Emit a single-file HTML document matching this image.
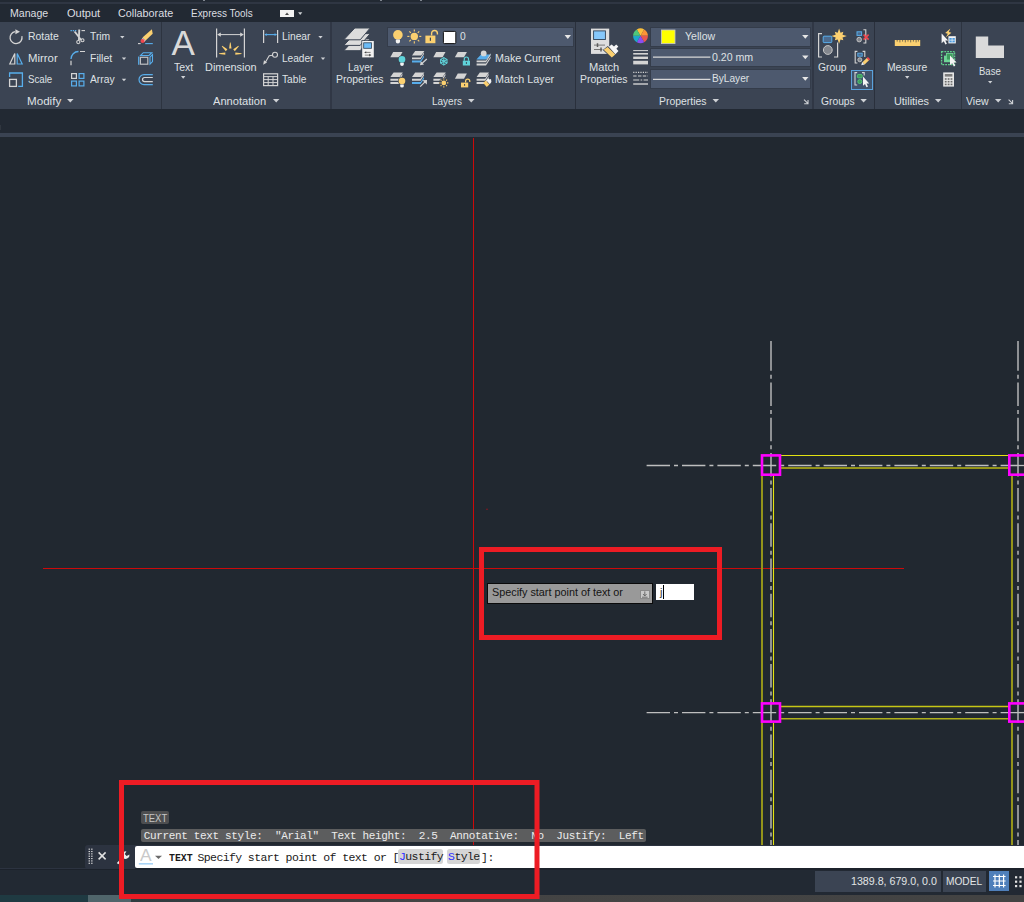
<!DOCTYPE html><html><head><meta charset='utf-8'><title>AutoCAD</title><style>
html,body{margin:0;padding:0;background:#212830;}
body{width:1024px;height:902px;position:relative;overflow:hidden;font-family:"Liberation Sans",sans-serif;}
.a{position:absolute;}
.l{position:absolute;white-space:pre;transform-origin:0 0;line-height:1.149;}
.sep{position:absolute;top:22px;height:87px;width:2px;background:#343c4a;}
.dd{position:absolute;background:#4d596e;border:1px solid #343c4a;box-sizing:border-box;}
.kw{background:#d5d5d5;border-radius:2.5px;padding-top:1.2px;padding-bottom:0px;}
.mono{font-family:"Liberation Mono","DejaVu Sans Mono",monospace;}
</style></head><body>
<div class='a' style='left:0;top:0;width:1024px;height:2px;background:#222933'></div>
<div class='a' style='left:0;top:2px;width:1024px;height:2px;background:#2f3643'></div><div class='a' style='left:0;top:4px;width:1024px;height:18px;background:#222933'></div>
<div class='a' style='left:0;top:22px;width:1024px;height:87px;background:#3b4453'></div>
<div class='a' style='left:0;top:109px;width:1024px;height:24px;background:#222933'></div>
<div class='a' style='left:0;top:133px;width:1024px;height:4px;background:#3a4352'></div>
<div class='a' style='left:0;top:137px;width:1024px;height:709px;background:#212830'></div>
<div class='sep' style='left:161px;width:1px;background:#2d3440'></div>
<div class='sep' style='left:330px;width:2px;background:#303745'></div>
<div class='sep' style='left:575px;width:1px;background:#2a303c'></div>
<div class='sep' style='left:812px;width:2px;background:#303745'></div>
<div class='sep' style='left:874px;width:1px;background:#2a303c'></div>
<div class='sep' style='left:961px;width:1px;background:#2d3440'></div>
<div class='dd' style='left:387px;top:27px;width:187px;height:20px'></div>
<div class='dd' style='left:650px;top:27px;width:161px;height:20px'></div>
<div class='dd' style='left:650px;top:48px;width:161px;height:19px'></div>
<div class='dd' style='left:650px;top:69px;width:161px;height:20px'></div>
<div class='a' style='left:851px;top:70px;width:22px;height:20px;box-sizing:border-box;border:1px solid #5aa2dc;background:#40536c'></div>
<div class='a' style='left:0;top:124.5px;width:1.3px;height:5.5px;background:#30363f'></div>
<div class='a' style='left:203px;top:0;width:2px;height:1px;background:#7f858f'></div>
<div class='a' style='left:380px;top:0;width:2px;height:1px;background:#7f858f'></div>
<div class='a' style='left:420px;top:0;width:2px;height:1px;background:#7f858f'></div>
<svg class="a" style="left:0;top:137px" width="1024" height="709" viewBox="0 137 1024 709">
<!-- crosshair -->
<rect x="473" y="138" width="1" height="707" fill="#cc0a0a"/>
<rect x="43" y="568" width="861" height="1" fill="#cc0a0a"/>
<rect x="486" y="508.7" width="2" height="1.1" fill="#7a1a22"/>
<!-- center lines -->
<g stroke="#8f9194" stroke-width="2" fill="none">
<path d="M771 341V348"/>
<path d="M771 347.3V846" stroke-dasharray="23.5 4 4 3.7"/>
<path d="M1018 341V348"/>
<path d="M1018 347.3V846" stroke-dasharray="23.5 4 4 3.7"/>
</g>
<g stroke="#bebebe" stroke-width="1.3" fill="none">
<path d="M646.6 465.5H1024" stroke-dasharray="23.4 4 4 4"/>
<path d="M646.6 712.6H1024" stroke-dasharray="23.4 4 4 4"/>
</g>
<!-- yellow walls -->
<g fill="none">
<path d="M781 455.5H1008" stroke="#e2e212" stroke-width="1.1"/>
<path d="M781 468H1008" stroke="#94941a" stroke-width="2"/>
<path d="M762 476V846" stroke="#94941a" stroke-width="2"/>
<path d="M773.5 476V702M773.5 723V846" stroke="#e2e212" stroke-width="1.1"/>
<path d="M1012 476V702M1012 723V846" stroke="#94941a" stroke-width="2"/>
<path d="M781 706.5H1008" stroke="#c6c616" stroke-width="1.3"/>
<path d="M781 718.8H1008" stroke="#b0b01a" stroke-width="1.6"/>
</g>
<!-- magenta squares -->
<g fill="none" stroke="#ff00ff" stroke-width="2.6">
<rect x="762" y="455.4" width="18" height="19.3"/>
<rect x="1009.3" y="455.4" width="18" height="19.3"/>
<rect x="762" y="703.4" width="18" height="18.2"/>
<rect x="1009.3" y="703.4" width="18" height="18.2"/>
</g>
<!-- red annotation rectangles -->
<g fill="none" stroke="#ed1c24" stroke-width="5">
<rect x="481.5" y="549.5" width="238" height="88"/>
</g>
</svg>

<div class='a' style='left:85px;top:845px;width:939px;height:24px;background:#2c3340;border-radius:3px 0 0 3px'></div>
<div class='a' style='left:135px;top:845.5px;width:889px;height:22.5px;background:#fff;border-radius:2px 0 0 2px'></div>
<div class='a' style='left:0;top:869px;width:1024px;height:26px;background:#222933'></div>
<div class='a' style='left:0;top:868px;width:1024px;height:2px;background:#1c222b'></div>
<div class='a' style='left:0;top:868px;width:135px;height:1px;background:#2c3340'></div>
<div class='a' style='left:815px;top:871px;width:126px;height:21px;background:#3b4453'></div>
<div class='a' style='left:943px;top:871px;width:43px;height:21px;background:#3b4453'></div>
<div class='a' style='left:989px;top:871px;width:20px;height:20px;background:#4f7fba'></div>
<div class='a' style='left:0;top:895px;width:1024px;height:7px;background:linear-gradient(90deg,#2f3c40 131px,#444 420px,#434343 1024px)'></div>
<div class='a' style='left:0;top:895px;width:88px;height:7px;background:#1f3a42'></div>
<div class='a' style='left:88px;top:895px;width:43px;height:7px;background:#50656b'></div>
<div class='a' style='left:141px;top:811px;width:28.4px;height:13px;background:#4d4e50;border-radius:2px'></div>
<div class='a' style='left:141px;top:828.5px;width:505px;height:13.5px;background:rgba(100,100,100,0.88);border-radius:2px'></div>
<div class='a mono' id='hist' style='left:143.7px;top:830px;font-size:11px;line-height:13px;color:#ececec;white-space:pre;letter-spacing:-0.35px'>Current text style:  "Arial"  Text height:  2.5  Annotative:  No  Justify:  Left</div>
<div class='a mono' id='cmd' style='left:168.5px;top:850.6px;font-size:11.5px;line-height:14px;color:#1a1a1a;white-space:pre;letter-spacing:-0.61px'><b style='display:inline-block;letter-spacing:0;transform:scaleX(0.86);transform-origin:0 50%;margin-right:-4.9px'>TEXT</b> Specify start point of text or [<span class='kw' style='margin-left:-0.8px;padding-left:1px'><span style='color:#2b2bff'>J</span>ustify</span> <span class='kw' style='margin-left:-2.05px;padding-left:0.75px;padding-right:0.55px'><span style='color:#2b2bff'>S</span>tyle</span><span style='margin-left:1px'>]:</span></div>
<div class='a' style='left:487px;top:583px;width:166px;height:21px;box-sizing:border-box;border:1px solid #0a0a0a;background:#999999'></div>
<div class='a' style='left:640px;top:589.5px;width:9.5px;height:9px;background:#c9c9c9;border:1px solid #8a8a8a;box-sizing:border-box'></div>
<div class='a' style='left:656px;top:584px;width:38px;height:16px;background:#fff'></div>
<div class='a' style='left:663px;top:585px;width:1px;height:13.5px;background:#000'></div>
<div class='l' style='left:660px;top:585.5px;font-size:11px;color:#333'>j</div>
<div class='l' style='left:9.50px;top:6.59px;font-size:11.5px;color:#dcdee1;transform:scaleX(0.9191)'>Manage</div>
<div class='l' style='left:66.50px;top:6.59px;font-size:11.5px;color:#dcdee1;transform:scaleX(0.9614)'>Output</div>
<div class='l' style='left:117.50px;top:6.59px;font-size:11.5px;color:#dcdee1;transform:scaleX(0.9383)'>Collaborate</div>
<div class='l' style='left:190.50px;top:6.59px;font-size:11.5px;color:#dcdee1;transform:scaleX(0.8643)'>Express Tools</div>
<div class='l' style='left:27.50px;top:29.59px;font-size:11.5px;color:#dfe1e4;transform:scaleX(0.9059)'>Rotate</div>
<div class='l' style='left:27.50px;top:51.59px;font-size:11.5px;color:#dfe1e4;transform:scaleX(0.9890)'>Mirror</div>
<div class='l' style='left:27.50px;top:72.59px;font-size:11.5px;color:#dfe1e4;transform:scaleX(0.8408)'>Scale</div>
<div class='l' style='left:89.50px;top:29.59px;font-size:11.5px;color:#dfe1e4;transform:scaleX(0.8953)'>Trim</div>
<div class='l' style='left:89.50px;top:51.59px;font-size:11.5px;color:#dfe1e4;transform:scaleX(0.9143)'>Fillet</div>
<div class='l' style='left:89.50px;top:72.59px;font-size:11.5px;color:#dfe1e4;transform:scaleX(0.8951)'>Array</div>
<div class='l' style='left:26.50px;top:94.59px;font-size:11.5px;color:#dfe1e4;transform:scaleX(1.0096)'>Modify</div>
<div class='l' style='left:173.50px;top:60.59px;font-size:11.5px;color:#dfe1e4;transform:scaleX(0.9102)'>Text</div>
<div class='l' style='left:205.00px;top:60.59px;font-size:11.5px;color:#dfe1e4;transform:scaleX(0.9516)'>Dimension</div>
<div class='l' style='left:282.00px;top:29.59px;font-size:11.5px;color:#dfe1e4;transform:scaleX(0.8899)'>Linear</div>
<div class='l' style='left:282.00px;top:51.59px;font-size:11.5px;color:#dfe1e4;transform:scaleX(0.8782)'>Leader</div>
<div class='l' style='left:282.00px;top:72.59px;font-size:11.5px;color:#dfe1e4;transform:scaleX(0.8836)'>Table</div>
<div class='l' style='left:213.10px;top:94.59px;font-size:11.5px;color:#dfe1e4;transform:scaleX(0.9673)'>Annotation</div>
<div class='l' style='left:347.50px;top:60.59px;font-size:11.5px;color:#dfe1e4;transform:scaleX(0.8756)'>Layer</div>
<div class='l' style='left:336.10px;top:72.59px;font-size:11.5px;color:#dfe1e4;transform:scaleX(0.9080)'>Properties</div>
<div class='l' style='left:460.00px;top:29.59px;font-size:11.5px;color:#dfe1e4;transform:scaleX(0.8898)'>0</div>
<div class='l' style='left:494.50px;top:51.59px;font-size:11.5px;color:#dfe1e4;transform:scaleX(0.9358)'>Make Current</div>
<div class='l' style='left:494.50px;top:72.59px;font-size:11.5px;color:#dfe1e4;transform:scaleX(0.9355)'>Match Layer</div>
<div class='l' style='left:432.25px;top:94.59px;font-size:11.5px;color:#dfe1e4;transform:scaleX(0.8673)'>Layers</div>
<div class='l' style='left:589.25px;top:60.59px;font-size:11.5px;color:#dfe1e4;transform:scaleX(0.9640)'>Match</div>
<div class='l' style='left:580.25px;top:72.59px;font-size:11.5px;color:#dfe1e4;transform:scaleX(0.9052)'>Properties</div>
<div class='l' style='left:684.50px;top:29.59px;font-size:11.5px;color:#dfe1e4;transform:scaleX(0.9199)'>Yellow</div>
<div class='l' style='left:711.50px;top:50.59px;font-size:11.5px;color:#dfe1e4;transform:scaleX(0.9207)'>0.20 mm</div>
<div class='l' style='left:711.50px;top:72.09px;font-size:11.5px;color:#dfe1e4;transform:scaleX(0.8818)'>ByLayer</div>
<div class='l' style='left:659.25px;top:94.59px;font-size:11.5px;color:#dfe1e4;transform:scaleX(0.9052)'>Properties</div>
<div class='l' style='left:818.10px;top:60.59px;font-size:11.5px;color:#dfe1e4;transform:scaleX(0.8946)'>Group</div>
<div class='l' style='left:820.50px;top:94.59px;font-size:11.5px;color:#dfe1e4;transform:scaleX(0.8935)'>Groups</div>
<div class='l' style='left:887.10px;top:60.59px;font-size:11.5px;color:#dfe1e4;transform:scaleX(0.8983)'>Measure</div>
<div class='l' style='left:893.50px;top:94.59px;font-size:11.5px;color:#dfe1e4;transform:scaleX(0.9430)'>Utilities</div>
<div class='l' style='left:979.00px;top:64.59px;font-size:11.5px;color:#dfe1e4;transform:scaleX(0.8277)'>Base</div>
<div class='l' style='left:966.10px;top:94.59px;font-size:11.5px;color:#dfe1e4;transform:scaleX(0.9143)'>View</div>
<div class='l' style='left:850.50px;top:875.29px;font-size:11.5px;color:#e2e4e6;transform:scaleX(0.9265)'>1389.8, 679.0, 0.0</div>
<div class='l' style='left:946.10px;top:875.29px;font-size:11.5px;color:#e2e4e6;transform:scaleX(0.8825)'>MODEL</div>
<div class='l' style='left:491.50px;top:585.64px;font-size:11px;color:#141414;transform:scaleX(0.9824)'>Specify start point of text or</div>
<div class='l' style='left:142.50px;top:811.54px;font-size:11px;color:#c6c6c6;transform:scaleX(0.8604)'>TEXT</div>
<svg class="a" style="left:0;top:0" width="1024" height="110" viewBox="0 0 1024 110"><rect x="280" y="10" width="14" height="7" fill="#f2f2f2"/>
<path d="M285 15h4l-2-2.6z" fill="#444"/>
<path d="M298.09999999999997 12.299999999999999H302.3L300.2 14.9Z" fill="#cfd2d6"/>
<path d="M15.2 31.6A6 6 0 1 0 21.9 36.2" fill="none" stroke="#d4d4d4" stroke-width="1.3"/>
<path d="M15.4 29.2l4.6 2.5-4.6 2.6z" fill="#d4d4d4"/>
<path d="M14.8 53.5V64H9.8Z" fill="none" stroke="#d4d4d4" stroke-width="1.2" stroke-linejoin="miter"/>
<path d="M17.2 53.5V64h5Z" fill="none" stroke="#58aeec" stroke-width="1.2"/>
<path d="M9.6 77V73H22.4V86.4H18.2" fill="none" stroke="#58aeec" stroke-width="1.3"/>
<rect x="9.6" y="79.4" width="6.8" height="7" fill="none" stroke="#d4d4d4" stroke-width="1.3"/>
<path d="M70.5 30.6H76.5" stroke="#58aeec" stroke-width="1.1" stroke-dasharray="1.4 0.8"/>
<path d="M81.5 30.6H85" stroke="#d4d4d4" stroke-width="1.1"/>
<path d="M73.7 31.7l1.9-.5 6.2 8.2-1.3 1zM78.3 29.5h1.9l-.5 10.9-1.7.2z" fill="#d4d4d4"/>
<circle cx="78.3" cy="42.1" r="1.6" fill="none" stroke="#d4d4d4" stroke-width="1.1"/>
<circle cx="82.5" cy="40.3" r="1.5" fill="none" stroke="#d4d4d4" stroke-width="1.1"/>
<path d="M71 59A7.5 7.5 0 0 1 78.5 51.5" fill="none" stroke="#58aeec" stroke-width="1.3"/>
<path d="M80 51.5H85M71 60.7V65.3" stroke="#d4d4d4" stroke-width="1.2"/>
<rect x="71.6" y="73.6" width="4.8" height="4.8" fill="none" stroke="#d4d4d4" stroke-width="1.2"/>
<rect x="79.1" y="73.6" width="4.8" height="4.8" fill="none" stroke="#58aeec" stroke-width="1.2"/>
<rect x="71.6" y="81.1" width="4.8" height="4.8" fill="none" stroke="#58aeec" stroke-width="1.2"/>
<rect x="79.1" y="81.1" width="4.8" height="4.8" fill="none" stroke="#58aeec" stroke-width="1.2"/>
<path d="M120.1 35.900000000000006H124.5L122.3 38.5Z" fill="#cfd2d6"/>
<path d="M121.8 57.400000000000006H126.2L124 60.0Z" fill="#cfd2d6"/>
<path d="M121.8 78.7H126.2L124 81.3Z" fill="#cfd2d6"/>
<path d="M67.05 99.0H73.55L70.3 102.6Z" fill="#cfd2d6"/>
<path d="M151.9 29.2l.8 4.5-7.1 6.8-3.1-2.9z" fill="#fbd070"/>
<path d="M142.8 38l2.8 2.6-1.3 1.3-2.8-2.7z" fill="#f4f4f4"/>
<circle cx="142.6" cy="41" r="2.1" fill="#f0474f"/>
<path d="M138 43.6H140.6" stroke="#d4d4d4" stroke-width="1.1"/><path d="M145.2 43.6H152.8" stroke="#58aeec" stroke-width="1.1"/>
<path d="M138.7 56.6V64.7" stroke="#58aeec" stroke-width="1.2"/>
<path d="M140.6 55.5L143.3 52.7H151.8L149 55.5Z" fill="none" stroke="#58aeec" stroke-width="1.1"/>
<path d="M150 57.2L152.5 54.6V61.6L150 64.2Z" fill="none" stroke="#58aeec" stroke-width="1.1"/>
<rect x="140.4" y="57.3" width="7.4" height="6.9" fill="none" stroke="#bfc1c4" stroke-width="1.2"/>
<path d="M152.8 74.6H144A5 5 0 0 0 144 84.6H152.8" fill="none" stroke="#58aeec" stroke-width="1.2"/>
<path d="M152.8 77.5H144.6A2.1 2.1 0 0 0 144.6 81.7H152.8" fill="none" stroke="#d4d4d4" stroke-width="1.2"/>
<path d="M216.6 28.6V57.6M244.4 28.6V57.6" stroke="#d4d4d4" stroke-width="1.2"/>
<path d="M218 34.6H243" stroke="#d4d4d4" stroke-width="1"/>
<path d="M217.2 34.6l3.6-2.2v4.4zM243.8 34.6l-3.6-2.2v4.4z" fill="#d4d4d4"/>
<path d="M235.30 54.80L235.30 52.40L241.50 53.25L241.50 53.95Z" fill="#fbd070"/>
<path d="M234.82 51.15L233.21 49.36L238.39 45.85L238.86 46.37Z" fill="#fbd070"/>
<path d="M231.50 48.60L229.10 48.60L229.95 42.40L230.65 42.40Z" fill="#fbd070"/>
<path d="M227.39 49.36L225.78 51.15L221.74 46.37L222.21 45.85Z" fill="#fbd070"/>
<path d="M225.30 52.40L225.30 54.80L219.10 53.95L219.10 53.25Z" fill="#fbd070"/>
<path d="M181.0 76.10000000000001H185.39999999999998L183.2 78.7Z" fill="#cfd2d6"/>
<path d="M263.6 30V43M277.6 30V43" stroke="#d4d4d4" stroke-width="1.2"/>
<path d="M265 34.6H276.4" stroke="#58aeec" stroke-width="1.1"/><path d="M264.3 34.6l2.4-1.4v2.8zM277 34.6l-2.4-1.4v2.8z" fill="#58aeec"/>
<circle cx="275" cy="54.8" r="2.5" fill="none" stroke="#d4d4d4" stroke-width="1.1"/>
<path d="M272.6 55.3L269.2 55.8L265.4 62.2" fill="none" stroke="#d4d4d4" stroke-width="1.1"/>
<path d="M263.2 64.8l.8-4.6 3 2.4z" fill="#d4d4d4"/>
<rect x="263.6" y="73.8" width="14" height="11.8" fill="none" stroke="#d4d4d4" stroke-width="1.2"/>
<path d="M263.6 76.6H277.6M263.6 79.6H277.6M263.6 82.6H277.6M268.2 76.6V85.6M273 76.6V85.6" stroke="#d4d4d4" stroke-width="1"/>
<path d="M318.3 35.900000000000006H322.7L320.5 38.5Z" fill="#cfd2d6"/>
<path d="M320.8 57.400000000000006H325.2L323 60.0Z" fill="#cfd2d6"/>
<path d="M272.95 99.0H279.45L276.2 102.6Z" fill="#cfd2d6"/>
<path d="M354.8 38.9H370.2L360.2 50.699999999999996H343.8Z" fill="#dcdcdc" stroke="#3b4453" stroke-width="1"/>
<path d="M354.8 33.6H370.2L360.2 45.4H343.8Z" fill="#dcdcdc" stroke="#3b4453" stroke-width="1"/>
<path d="M354.8 28H370.2L360.2 39.8H343.8Z" fill="#dcdcdc" stroke="#3b4453" stroke-width="1"/>
<rect x="361.4" y="40.2" width="13.1" height="17.9" fill="#3b4453"/>
<rect x="362.2" y="41" width="11.6" height="16.4" fill="#f2f2f2"/>
<rect x="363.7" y="42.8" width="7.8" height="5.5" fill="#6cbcf7" stroke="#2f4257" stroke-width=".8"/>
<path d="M365.4 52.4h5.2M364.8 55.1h5" stroke="#6e6e6e" stroke-width=".9"/><path d="M366.2 51.2l-2 1.2 2 1.2zM369.2 53.8l2.2 1.3-2.2 1.3z" fill="#444"/>
<circle cx="397.9" cy="34.9" r="4.8" fill="#fbd070"/><path d="M395.8 39.4h4.2v2.4a2.1 1.6 0 0 1-4.2 0z" fill="#f4f4f4"/>
<circle cx="414.3" cy="36.4" r="3.7" fill="#fbd070"/>
<path d="M419.20 36.40L421.30 36.40" stroke="#fbd070" stroke-width="1.1"/>
<path d="M417.76 39.86L419.25 41.35" stroke="#fbd070" stroke-width="1.1"/>
<path d="M414.30 41.30L414.30 43.40" stroke="#fbd070" stroke-width="1.1"/>
<path d="M410.84 39.86L409.35 41.35" stroke="#fbd070" stroke-width="1.1"/>
<path d="M409.40 36.40L407.30 36.40" stroke="#fbd070" stroke-width="1.1"/>
<path d="M410.84 32.94L409.35 31.45" stroke="#fbd070" stroke-width="1.1"/>
<path d="M414.30 31.50L414.30 29.40" stroke="#fbd070" stroke-width="1.1"/>
<path d="M417.76 32.94L419.25 31.45" stroke="#fbd070" stroke-width="1.1"/>
<rect x="425.4" y="35.6" width="10" height="7.6" fill="#fbd070"/><path d="M431.6 35.6V33.4A2.9 2.9 0 0 1 437.4 33.4V34.6" fill="none" stroke="#fbd070" stroke-width="1.4"/><rect x="429.8" y="37.6" width="1.2" height="3.2" fill="#3b4453"/>
<rect x="443.4" y="31.4" width="12.4" height="12.2" rx="1" fill="#fff" stroke="#111" stroke-width="1"/>
<path d="M564.5999999999999 35.1H571.0L567.8 38.9Z" fill="#e6e6e6"/>
<path d="M393.2 52h9.3l-2.9 5.3h-9.3Z" fill="#d4d4d4"/>
<circle cx="402" cy="59.4" r="3.9" fill="#3b4453"/><circle cx="402" cy="59.4" r="3.3" fill="#5fd3da"/><path d="M400.2 62.8h3.6v1.8a1.8 1.3 0 0 1-3.6 0z" fill="#f4f4f4"/>
<path d="M415.2 51h9.2l-3.2 4.6h-9.2Z" fill="#d4d4d4"/>
<path d="M412 57.4h8.6l3.4 -5.27v1.9l-3.4 5.27h-8.6Z" fill="#d4d4d4"/>
<path d="M412 60.6h8.6l3.4 -5.27v1.9l-3.4 5.27h-8.6Z" fill="#58aeec"/>
<path d="M426.8 59L421.6 63.8" stroke="#d4d4d4" stroke-width="1.2"/><path d="M420 65.2l.8-4 3.2 3.2z" fill="#d4d4d4"/>
<path d="M436.2 52h9.3l-2.9 5.3h-9.3Z" fill="#d4d4d4"/>
<path d="M440.34 59.30L447.26 63.30" stroke="#5fd3da" stroke-width="1.1"/>
<path d="M443.80 57.30L443.80 65.30" stroke="#5fd3da" stroke-width="1.1"/>
<path d="M447.26 59.30L440.34 63.30" stroke="#5fd3da" stroke-width="1.1"/>
<path d="M443.8 57.6l3.2 1.85v3.7l-3.2 1.85-3.2-1.85v-3.7z" fill="none" stroke="#5fd3da" stroke-width="1"/>
<path d="M457.8 52h9.1l-2.9 5.3h-9.1Z" fill="#d4d4d4"/>
<rect x="462.8" y="60.7" width="7.2" height="4.8" fill="#5fd3da"/>
<path d="M464.3 60.7V59.1A2.1 2.1 0 0 1 468.5 59.1V60.7" fill="none" stroke="#5fd3da" stroke-width="1.2"/>
<rect x="465.90000000000003" y="62.1" width="1" height="1.8" fill="#3b4453"/>
<path d="M481 54.4h10l-4.8 5h-9.8z" fill="#58aeec"/>
<circle cx="483.7" cy="53.4" r="2.9" fill="#d6d6d6"/>
<path d="M476.6 60.4h9.4l4.6 -7.13v1.9l-4.6 7.13h-9.4Z" fill="#d4d4d4"/>
<path d="M476.6 63.6h9.4l4.6 -7.13v1.9l-4.6 7.13h-9.4Z" fill="#d4d4d4"/>
<path d="M393.59999999999997 72.4h9.2l-3.2 4.6h-9.2Z" fill="#d4d4d4"/>
<path d="M390.4 78.80000000000001h8.6l3.4 -5.27v1.9l-3.4 5.27h-8.6Z" fill="#d4d4d4"/>
<path d="M390.4 82.0h8.6l3.4 -5.27v1.9l-3.4 5.27h-8.6Z" fill="#d4d4d4"/>
<circle cx="402" cy="81" r="3.9" fill="#3b4453"/><circle cx="402" cy="81" r="3.3" fill="#fbd070"/><path d="M400.2 84.4h3.6v1.8a1.8 1.3 0 0 1-3.6 0z" fill="#f4f4f4"/>
<path d="M415.2 72.4h9.2l-3.2 4.6h-9.2Z" fill="#d4d4d4"/>
<path d="M412 78.80000000000001h8.6l3.4 -5.27v1.9l-3.4 5.27h-8.6Z" fill="#d4d4d4"/>
<path d="M412 82.0h8.6l3.4 -5.27v1.9l-3.4 5.27h-8.6Z" fill="#58aeec"/>
<path d="M420.2 86.6L425 81.8" stroke="#d4d4d4" stroke-width="1.2"/><path d="M427 80l-.2 4.6-4.4-4.4z" fill="#d4d4d4"/>
<path d="M436.59999999999997 72.4h9.2l-3.2 4.6h-9.2Z" fill="#d4d4d4"/>
<path d="M433.4 78.80000000000001h8.6l3.4 -5.27v1.9l-3.4 5.27h-8.6Z" fill="#d4d4d4"/>
<path d="M433.4 82.0h8.6l3.4 -5.27v1.9l-3.4 5.27h-8.6Z" fill="#d4d4d4"/>
<circle cx="443.8" cy="82.9" r="4.9" fill="#3b4453"/><circle cx="443.8" cy="82.9" r="2.4" fill="#fbd070"/>
<path d="M447.10 82.90L448.30 82.90" stroke="#fbd070" stroke-width="1.1"/>
<path d="M446.13 85.23L446.98 86.08" stroke="#fbd070" stroke-width="1.1"/>
<path d="M443.80 86.20L443.80 87.40" stroke="#fbd070" stroke-width="1.1"/>
<path d="M441.47 85.23L440.62 86.08" stroke="#fbd070" stroke-width="1.1"/>
<path d="M440.50 82.90L439.30 82.90" stroke="#fbd070" stroke-width="1.1"/>
<path d="M441.47 80.57L440.62 79.72" stroke="#fbd070" stroke-width="1.1"/>
<path d="M443.80 79.60L443.80 78.40" stroke="#fbd070" stroke-width="1.1"/>
<path d="M446.13 80.57L446.98 79.72" stroke="#fbd070" stroke-width="1.1"/>
<path d="M457.8 73.4h9.1l-2.9 5.3h-9.1Z" fill="#d4d4d4"/>
<rect x="461" y="82.6" width="7.2" height="4.8" fill="#fbd070"/>
<path d="M465.6 82.6V81.19999999999999A2.1 2.1 0 0 1 469.8 81.19999999999999V82.0" fill="none" stroke="#fbd070" stroke-width="1.2"/>
<rect x="464.1" y="84.0" width="1" height="1.8" fill="#3b4453"/>
<path d="M479.8 72.4h9.2l-3.2 4.6h-9.2Z" fill="#d4d4d4"/>
<path d="M476.6 78.80000000000001h8.6l3.4 -5.27v1.9l-3.4 5.27h-8.6Z" fill="#d4d4d4"/>
<path d="M476.6 82.0h8.6l3.4 -5.27v1.9l-3.4 5.27h-8.6Z" fill="#d4d4d4"/>
<path d="M483.2 83l2.6-2.4 3.6 3.8-2.6 2.6z" fill="#fbd070"/><path d="M486.2 80.2l2.4-1.8 1 1.2 1.4-.6.4 3-1.6 2.2z" fill="#f2f2f2"/>
<path d="M468.05 99.0H474.55L471.3 102.6Z" fill="#cfd2d6"/>
<rect x="591" y="28.6" width="18.2" height="25.3" fill="#dedede"/>
<rect x="593.6" y="30.9" width="11.8" height="8.6" fill="#86c8fb" stroke="#2f4257" stroke-width=".9"/>
<path d="M594 45.1h11M594 49.5h8.4" stroke="#777" stroke-width="1"/><path d="M597.5 43.2v3.9M601 47.5v4" stroke="#5e5e5e" stroke-width="1.5"/>
<path d="M602.8 49.9l5-3.8 8.4 8.4-4.4 4z" fill="#3b4453"/>
<path d="M603.7 49.7l3.9-2.6 7.7 7.5-3.5 3z" fill="#fbd070"/>
<path d="M608.8 46.8l2.8-2.4 2.4 2.2 2.2-2.2 2.1 2-1.9 2.4 2.1 2.2-3.1 3.3z" fill="#f6f6f6"/>
<path d="M640.5 35.8L636.80 29.39A7.4 7.4 0 0 1 644.20 29.39Z" fill="#fbbf3a"/>
<path d="M640.5 35.8L644.20 29.39A7.4 7.4 0 0 1 647.90 35.80Z" fill="#fb9536"/>
<path d="M640.5 35.8L647.90 35.80A7.4 7.4 0 0 1 644.20 42.21Z" fill="#e8574f"/>
<path d="M640.5 35.8L644.20 42.21A7.4 7.4 0 0 1 636.80 42.21Z" fill="#8b4ff0"/>
<path d="M640.5 35.8L636.80 42.21A7.4 7.4 0 0 1 633.10 35.80Z" fill="#1fa8c9"/>
<path d="M640.5 35.8L633.10 35.80A7.4 7.4 0 0 1 636.80 29.39Z" fill="#4fc87a"/>
<path d="M633.2 50.6H648" stroke="#d4d4d4" stroke-width="1"/><path d="M633.2 53.8H648" stroke="#d4d4d4" stroke-width="1.6"/><path d="M633.2 57.8H648" stroke="#d4d4d4" stroke-width="2.4"/><path d="M633.2 62.6H648" stroke="#d4d4d4" stroke-width="3.6"/>
<path d="M633.2 72.4H648" stroke="#d4d4d4" stroke-width="1.1" stroke-dasharray="1.2 1.2"/><path d="M633.2 76H648" stroke="#d4d4d4" stroke-width="1.2" stroke-dasharray="3.4 1.4"/><path d="M633.2 80H648" stroke="#d4d4d4" stroke-width="1.2" stroke-dasharray="6 1.4 1.6 1.4"/><path d="M633.2 84H648" stroke="#d4d4d4" stroke-width="1.4"/>
<rect x="661.4" y="30" width="13.6" height="13.6" fill="#ffff00" stroke="#c9c9c9" stroke-width=".8"/>
<path d="M653 57.2H710.4M653 79.4H710.4" stroke="#d8d8d8" stroke-width="1.2"/>
<path d="M802.0999999999999 34.9H808.5L805.3 38.699999999999996Z" fill="#e6e6e6"/>
<path d="M802.0999999999999 55.5H808.5L805.3 59.3Z" fill="#e6e6e6"/>
<path d="M802.0999999999999 76.89999999999999H808.5L805.3 80.7Z" fill="#e6e6e6"/>
<path d="M712.55 99.0H719.05L715.8 102.6Z" fill="#cfd2d6"/>
<path d="M804 99.6l3.6 3.6M808 100v3.8h-3.8" fill="none" stroke="#cfd2d6" stroke-width="1.1"/>
<path d="M822 33.6h-3.4V57h3.4M834 57h3.6V42.4" fill="none" stroke="#d4d4d4" stroke-width="1.2"/>
<rect x="823.2" y="36.2" width="8.6" height="6.4" rx=".8" fill="#4c6b8f" stroke="#58aeec" stroke-width="1"/>
<circle cx="827.8" cy="50" r="4.4" fill="#83878e" stroke="#c9c9c9" stroke-width="1"/>
<path d="M839.10 28.40L840.52 32.68L843.34 31.86L842.52 34.68L846.80 36.10L842.52 37.52L843.34 40.34L840.52 39.52L839.10 43.80L837.68 39.52L834.86 40.34L835.68 37.52L831.40 36.10L835.68 34.68L834.86 31.86L837.68 32.68Z" fill="#fbd070"/>
<rect x="857" y="31.8" width="4.6" height="3.6" fill="#4c6b8f" stroke="#58aeec" stroke-width="1"/><circle cx="859.2" cy="39.6" r="2.3" fill="#83878e" stroke="#c9c9c9" stroke-width=".9"/>
<path d="M863.4 29.8h2.4V43h-2.4" fill="none" stroke="#d4d4d4" stroke-width="1.1"/>
<path d="M863.6 34.6l5 5M868.6 34.6l-5 5" stroke="#f0474f" stroke-width="1.6"/>
<path d="M857.4 51.4h-2.2V63h2.2M862.6 51.4h2.2V57" fill="none" stroke="#d4d4d4" stroke-width="1.1"/>
<rect x="857.8" y="53.2" width="4.4" height="3" fill="#4c6b8f" stroke="#58aeec" stroke-width=".9"/><circle cx="859.8" cy="59.8" r="2" fill="#83878e" stroke="#c9c9c9" stroke-width=".9"/>
<path d="M862.4 62.2l4.4-4.2 2.2 2.2-4.4 4.2z" fill="#fbd070"/><path d="M866.6 58.2l1.3-1.3 2.3 2.3-1.3 1.3z" fill="#f0474f"/><path d="M861.2 65.2l1-3.2 2.4 2.4z" fill="#eee"/>
<path d="M857.2 72.6h-2.2V85h2.2M862 72.6h2.2V75.4" fill="none" stroke="#d4d4d4" stroke-width="1.1"/>
<rect x="857.4" y="74.6" width="4.8" height="3.2" rx=".8" fill="#3f9b5c" stroke="#52c878" stroke-width=".9"/><circle cx="859.8" cy="81.6" r="2" fill="#3f9b5c" stroke="#52c878" stroke-width=".9"/>
<path d="M863 76.6v9.2l2-1.8 1.5 3.2 1.5-.7-1.5-3.1h2.7z" fill="#f4f4f4"/>
<path d="M860.35 99.0H866.85L863.6 102.6Z" fill="#cfd2d6"/>
<rect x="894.8" y="40" width="25.4" height="6" fill="#fbd070"/>
<path d="M897.2 40v1.6M899.9 40v2.4M902.6 40v1.6M905.3 40v2.4M908 40v1.6M910.7 40v2.4M913.4 40v1.6M916.1 40v2.4M918.4 40v1.6" stroke="#5a5545" stroke-width=".8"/>
<path d="M905.0 76.10000000000001H909.4000000000001L907.2 78.7Z" fill="#cfd2d6"/>
<path d="M941.6 33.6v9.6l2.2-2 1.6 3.2 1.5-.7-1.6-3.2h2.9z" fill="#f4f4f4"/>
<path d="M950.4 28.6l-5.2 4.4 2.6.8-2 3.6 5.6-4.6-2.6-.8z" fill="#fbd070"/>
<rect x="948.4" y="36.2" width="7.4" height="7.2" fill="#f4f4f4"/><rect x="949.4" y="38" width="5.4" height="4.4" fill="#4a9be0"/><path d="M949.4 40.2h5.4M952.1 38v4.4" stroke="#f4f4f4" stroke-width=".7"/>
<rect x="941.6" y="51.6" width="13" height="13" fill="none" stroke="#62cf8c" stroke-width="1.3" stroke-dasharray="1.8 1"/>
<rect x="944" y="55.6" width="6.4" height="6.6" fill="#6fd497"/><rect x="946.4" y="53.4" width="6.6" height="6.6" fill="#3f9b5c" stroke="#6fd497" stroke-width=".9"/>
<path d="M950 55.6v9.6l2.2-2 1.6 3.2 1.5-.7-1.6-3.2h2.9z" fill="#f4f4f4"/>
<rect x="943.2" y="72.4" width="10.8" height="14.2" fill="#e6e6e6"/><rect x="944.8" y="74" width="7.6" height="2.6" fill="#7d7d7d"/>
<rect x="944.8" y="78.2" width="1.8" height="1.6" fill="#6b6b6b"/>
<rect x="947.7" y="78.2" width="1.8" height="1.6" fill="#6b6b6b"/>
<rect x="950.6" y="78.2" width="1.8" height="1.6" fill="#6b6b6b"/>
<rect x="944.8" y="80.9" width="1.8" height="1.6" fill="#6b6b6b"/>
<rect x="947.7" y="80.9" width="1.8" height="1.6" fill="#6b6b6b"/>
<rect x="950.6" y="80.9" width="1.8" height="1.6" fill="#6b6b6b"/>
<rect x="944.8" y="83.6" width="1.8" height="1.6" fill="#6b6b6b"/>
<rect x="947.7" y="83.6" width="1.8" height="1.6" fill="#6b6b6b"/>
<rect x="950.6" y="83.6" width="1.8" height="1.6" fill="#6b6b6b"/>
<path d="M934.95 99.0H941.45L938.2 102.6Z" fill="#cfd2d6"/>
<path d="M975.8 36.6h12.4v9h15.8V58H975.8z" fill="#dadada"/>
<path d="M988.0 80.9H992.4000000000001L990.2 83.5Z" fill="#cfd2d6"/>
<path d="M994.95 99.0H1001.45L998.2 102.6Z" fill="#cfd2d6"/>
<path d="M1008.6 99.6l3.6 3.6M1012.6 100v3.8h-3.8" fill="none" stroke="#cfd2d6" stroke-width="1.1"/></svg><div class="l" style="left:171.6px;top:23.4px;font-size:35px;color:#d9d9d9;line-height:1.149">A</div><svg class="a" style="left:0;top:0;pointer-events:none" width="1024" height="902" viewBox="0 0 1024 902"><rect x="88.6" y="848.60" width="1.3" height="1.15" fill="#e6e6e6"/>
<rect x="91.2" y="848.60" width="1.3" height="1.15" fill="#e6e6e6"/>
<rect x="88.6" y="850.95" width="1.3" height="1.15" fill="#e6e6e6"/>
<rect x="91.2" y="850.95" width="1.3" height="1.15" fill="#e6e6e6"/>
<rect x="88.6" y="853.30" width="1.3" height="1.15" fill="#e6e6e6"/>
<rect x="91.2" y="853.30" width="1.3" height="1.15" fill="#e6e6e6"/>
<rect x="88.6" y="855.65" width="1.3" height="1.15" fill="#e6e6e6"/>
<rect x="91.2" y="855.65" width="1.3" height="1.15" fill="#e6e6e6"/>
<rect x="88.6" y="858.00" width="1.3" height="1.15" fill="#e6e6e6"/>
<rect x="91.2" y="858.00" width="1.3" height="1.15" fill="#e6e6e6"/>
<rect x="88.6" y="860.35" width="1.3" height="1.15" fill="#e6e6e6"/>
<rect x="91.2" y="860.35" width="1.3" height="1.15" fill="#e6e6e6"/>
<rect x="88.6" y="862.70" width="1.3" height="1.15" fill="#e6e6e6"/>
<rect x="91.2" y="862.70" width="1.3" height="1.15" fill="#e6e6e6"/>
<path d="M98.6 852.4l7 7M105.6 852.4l-7 7" stroke="#e2e2e2" stroke-width="1.5"/>
<path d="M117.6 863.6l6.6-6.8" stroke="#ececec" stroke-width="2"/><path d="M123.2 858a3.9 3.9 0 0 1 3.2-6.6l-1.7 2.7 1.9 1.9 2.9-1.5a3.9 3.9 0 0 1-6.3 3.5z" fill="#ececec"/>
<path d="M138.8 863.8H153" stroke="#a9d4f5" stroke-width="1.6"/>
<path d="M155 855.8h7l-3.5 3.2z" fill="#6a6a6a"/>
<path d="M993 876.5h12.6M993 881h12.6M993 885.5h12.6M995 874.6v13M999.3 874.6v13M1003.6 874.6v13" stroke="#fff" stroke-width="1.2"/>
<rect x="1015.0" y="876.2" width="2.2" height="2.2" fill="#e2e2e2"/>
<rect x="1019.4" y="876.2" width="2.2" height="2.2" fill="#e2e2e2"/>
<rect x="1015.0" y="880.6" width="2.2" height="2.2" fill="#e2e2e2"/>
<rect x="1019.4" y="880.6" width="2.2" height="2.2" fill="#e2e2e2"/>
<rect x="1015.0" y="885.0" width="2.2" height="2.2" fill="#e2e2e2"/>
<rect x="1019.4" y="885.0" width="2.2" height="2.2" fill="#e2e2e2"/>
<path d="M644.8 591.4v4.2M643 594l1.8 2 1.8-2M642 597.2h5.6" fill="none" stroke="#555" stroke-width=".8"/></svg><div class="l" style="left:140.4px;top:846.2px;font-size:17px;color:#c9c9c9;line-height:1.149;transform:scaleX(1.02)">A</div>
<svg class="a" style="left:0;top:0;pointer-events:none" width="1024" height="902" viewBox="0 0 1024 902"><rect x="121.5" y="782.5" width="415.5" height="114" fill="none" stroke="#ed1c24" stroke-width="5"/></svg>
</body></html>
